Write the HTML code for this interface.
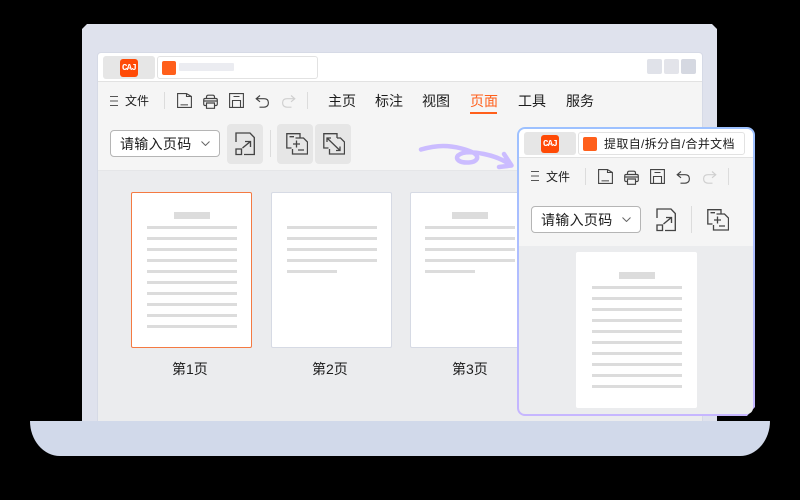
<!DOCTYPE html>
<html lang="zh"><head><meta charset="utf-8"><title>CAJ</title>
<style>
*{box-sizing:border-box;margin:0;padding:0}
html,body{width:800px;height:500px;background:#000;overflow:hidden}
body{position:relative;font-family:"Liberation Sans","Noto Sans CJK SC",sans-serif;color:#1c1c1c}
.a{position:absolute}
.t{position:absolute;white-space:nowrap;line-height:20px}
.logo{position:absolute;width:18px;height:18px;background:#ff4a06;border-radius:3px;color:#fff;font:bold 9px/18px "Liberation Mono",monospace;text-align:center;letter-spacing:-.7px}
.l{position:absolute;height:3px;background:#dcdcdc}
.card{position:absolute;width:121px;height:156px;background:#fff;border:1px solid #d6dae4;border-radius:2px}
svg{position:absolute;overflow:visible;fill:none}
</style></head><body>
<svg width="0" height="0" style="position:absolute"><defs>
<symbol id="menu" viewBox="0 0 8 10"><path d="M0 .5H8M0 5H8M0 9.5H8" stroke="#555" stroke-width="1" fill="none"/></symbol>
<symbol id="file" viewBox="0 0 15 15"><path d="M.6 .6H9.500L14.400 3.500V14.400H.6ZM9.500 .6V3.500H14.400" stroke="#444" stroke-width="1.100" fill="none"/><path d="M3.500 11.800H11" stroke="#777" stroke-width="1.400" fill="none"/></symbol>
<symbol id="print" viewBox="0 0 15 15"><path d="M3.500 4.500V3Q3.500 1.200 5.300 1.200H9.700Q11.500 1.200 11.500 3V4.500M3.500 11.500H2Q.7 11.500 .7 10V6Q.7 4.500 2 4.500H13Q14.300 4.500 14.300 6V10Q14.300 11.500 13 11.500H11.500M.9 7H14.100M3.500 9H11.500V14.300H3.500Z" stroke="#444" stroke-width="1.150" fill="none"/></symbol>
<symbol id="save" viewBox="0 0 15 15"><path d="M.6 .6H14.400V14.400H.6ZM3.500 14.400V7.500H11.500V14.400M4.500 3.500H10.500" stroke="#444" stroke-width="1.100" fill="none"/></symbol>
<symbol id="undo" viewBox="0 0 15 15"><path d="M5 1.500L1.200 4.700L5 7.800M1.500 4.700H9Q13.400 4.700 13.400 8.700T9 13.200H4.500" stroke="#444" stroke-width="1.150" fill="none"/></symbol>
<symbol id="redo" viewBox="0 0 15 15"><path d="M10 1.500L13.800 4.700L10 7.800M13.500 4.700H6Q1.600 4.700 1.600 8.700T6 13.200H10.500" stroke="#cfcfcf" stroke-width="1.150" fill="none"/></symbol>
<symbol id="ext" viewBox="0 0 20 24"><path d="M1 10V1H15L19.300 5.500V22.500H9" stroke="#444" stroke-width="1.350" fill="none"/><path d="M1 17H6.500V22.500H1ZM7.500 16L15 9.800M10 9.500H15.500V15" stroke="#444" stroke-width="1.350" fill="none"/></symbol>
<symbol id="merge" viewBox="0 0 22 22"><path d="M5.500 15H.8V.7H14V5M9.500 5H17.500L21.500 9V21H6.500V16" stroke="#444" stroke-width="1.300" fill="none"/><path d="M7 11H14M10.500 7.500V14.500M12 17H18M3.500 3.700H8" stroke="#444" stroke-width="1.300" fill="none"/></symbol>
<symbol id="split" viewBox="0 0 22 22"><path d="M5.500 15H.8V.7H14V5M14 5H17.500L21.500 9V21H6.500V16" stroke="#444" stroke-width="1.300" fill="none"/><path d="M4 5L17 17.500M4 9V5H8M13 17.500H17V13.500" stroke="#444" stroke-width="1.300" fill="none"/></symbol>
<symbol id="chev" viewBox="0 0 9 5"><path d="M.5 .5L4.500 4.500L8.500 .5" stroke="#666" stroke-width="1" fill="none"/></symbol>
</defs></svg>

<!-- laptop lid -->
<div class="a" style="left:82px;top:24px;width:635px;height:397px;background:#dfe2ed;clip-path:polygon(5px 0,630px 0,635px 5px,635px 397px,0 397px,0 5px)"></div>
<!-- screen -->
<div class="a" style="left:97px;top:52px;width:606px;height:369px;background:#d6dae6;border-radius:4px 4px 0 0"></div>
<div class="a" style="left:98px;top:53px;width:604px;height:28px;background:#fff;border-radius:3px 3px 0 0"></div>
<div class="a" style="left:98px;top:81px;width:604px;height:1px;background:#e2e2e2"></div>
<div class="a" style="left:98px;top:82px;width:604px;height:88px;background:#f5f5f5"></div>
<div class="a" style="left:98px;top:170px;width:604px;height:251px;background:#ebecee;border-top:1px solid #e5e6e8"></div>

<!-- title bar -->
<div class="a" style="left:103px;top:56px;width:52px;height:23px;background:#e6e6e6;border-radius:3px"></div>
<div class="logo" style="left:120px;top:59px">CAJ</div>
<div class="a" style="left:157px;top:56px;width:161px;height:23px;background:#fff;border:1px solid #e2e2e2;border-radius:3px"></div>
<div class="a" style="left:162px;top:61px;width:14px;height:14px;background:#ff5f1b;border-radius:2px"></div>
<div class="a" style="left:179px;top:63px;width:55px;height:8px;background:#ebecf1;border-radius:1px"></div>
<div class="a" style="left:647px;top:59px;width:15px;height:15px;background:#e0e2e9;border-radius:2px"></div>
<div class="a" style="left:664px;top:59px;width:15px;height:15px;background:#e3e4ea;border-radius:2px"></div>
<div class="a" style="left:681px;top:59px;width:15px;height:15px;background:#d5d8e1;border-radius:2px"></div>

<!-- menu row -->
<svg style="left:110px;top:96px" width="8" height="10"><use href="#menu"/></svg>
<div class="t" style="left:125px;top:91px;font-size:12px">文件</div>
<div class="a" style="left:164px;top:92px;width:1px;height:17px;background:#dcdcdc"></div>
<svg style="left:177px;top:93px" width="15" height="15"><use href="#file"/></svg>
<svg style="left:203px;top:94px" width="15" height="15"><use href="#print"/></svg>
<svg style="left:229px;top:93px" width="15" height="15"><use href="#save"/></svg>
<svg style="left:255px;top:94px" width="15" height="15"><use href="#undo"/></svg>
<svg style="left:281px;top:94px" width="15" height="15"><use href="#redo"/></svg>
<div class="a" style="left:307px;top:92px;width:1px;height:17px;background:#dcdcdc"></div>
<div class="t" style="left:328px;top:91px;font-size:14px">主页</div>
<div class="t" style="left:375px;top:91px;font-size:14px">标注</div>
<div class="t" style="left:422px;top:91px;font-size:14px">视图</div>
<div class="t" style="left:470px;top:91px;font-size:14px;color:#ff5f1b">页面</div>
<div class="a" style="left:470px;top:112px;width:27px;height:2px;background:#ff5f1b"></div>
<div class="t" style="left:518px;top:91px;font-size:14px">工具</div>
<div class="t" style="left:566px;top:91px;font-size:14px">服务</div>

<!-- toolbar row -->
<div class="a" style="left:110px;top:130px;width:110px;height:27px;background:#fff;border:1px solid #b5b5b5;border-radius:4px"></div>
<div class="t" style="left:120px;top:134px;font-size:14px;letter-spacing:.3px">请输入页码</div>
<svg style="left:201px;top:141px" width="9" height="5"><use href="#chev"/></svg>
<div class="a" style="left:227px;top:124px;width:36px;height:40px;background:#e6e6e6;border-radius:4px"></div>
<svg style="left:235px;top:132px" width="20" height="24"><use href="#ext"/></svg>
<div class="a" style="left:270px;top:130px;width:1px;height:27px;background:#dcdcdc"></div>
<div class="a" style="left:277px;top:124px;width:36px;height:40px;background:#e6e6e6;border-radius:4px"></div>
<svg style="left:286px;top:133px" width="22" height="22"><use href="#merge"/></svg>
<div class="a" style="left:315px;top:124px;width:36px;height:40px;background:#e6e6e6;border-radius:4px"></div>
<svg style="left:323px;top:133px" width="22" height="22"><use href="#split"/></svg>

<!-- pages -->
<div class="card" style="left:131px;top:192px;border-color:#f47a42"></div>
<div class="a" style="left:174px;top:212px;width:36px;height:7px;background:#dcdcdc"></div>
<div class="l" style="left:147px;top:226px;width:90px"></div><div class="l" style="left:147px;top:237px;width:90px"></div>
<div class="l" style="left:147px;top:248px;width:90px"></div><div class="l" style="left:147px;top:259px;width:90px"></div>
<div class="l" style="left:147px;top:270px;width:90px"></div><div class="l" style="left:147px;top:281px;width:90px"></div>
<div class="l" style="left:147px;top:292px;width:90px"></div><div class="l" style="left:147px;top:303px;width:90px"></div>
<div class="l" style="left:147px;top:314px;width:90px"></div><div class="l" style="left:147px;top:325px;width:90px"></div>
<div class="t" style="left:172px;top:359px;font-size:14px">第1页</div>

<div class="card" style="left:271px;top:192px"></div>
<div class="l" style="left:287px;top:226px;width:90px"></div><div class="l" style="left:287px;top:237px;width:90px"></div>
<div class="l" style="left:287px;top:248px;width:90px"></div><div class="l" style="left:287px;top:259px;width:90px"></div>
<div class="l" style="left:287px;top:270px;width:50px"></div>
<div class="t" style="left:312px;top:359px;font-size:14px">第2页</div>

<div class="card" style="left:410px;top:192px"></div>
<div class="a" style="left:452px;top:212px;width:36px;height:7px;background:#dcdcdc"></div>
<div class="l" style="left:425px;top:226px;width:90px"></div><div class="l" style="left:425px;top:237px;width:90px"></div>
<div class="l" style="left:425px;top:248px;width:90px"></div><div class="l" style="left:425px;top:259px;width:90px"></div>
<div class="l" style="left:425px;top:270px;width:50px"></div>
<div class="t" style="left:452px;top:359px;font-size:14px">第3页</div>

<!-- arrow -->
<svg style="left:0;top:0" width="800" height="500"><path d="M421 149.500C430 147 436 146 443 146C456 146 468 150 474 153C480 157 477 162 469 162.500C459 163 455 159 458 155.500C463 151 474 152 484 154C494 156 504 160 511 165.500M504 154L511.500 165.500L499 167" stroke="#cbbcff" stroke-width="4.500" stroke-linecap="round" stroke-linejoin="round"/></svg>

<!-- base -->
<div class="a" style="left:30px;top:421px;width:740px;height:35px;background:#d1d9ea;border-radius:0 0 30px 30px/0 0 35px 35px"></div>

<!-- popup -->
<div class="a" style="left:517px;top:127px;width:238px;height:289px;background:linear-gradient(180deg,#9dc1ff 0%,#b4bcff 60%,#c6b6ff 100%);border-radius:8px;clip-path:polygon(0 0,100% 0,100% 280px,230px 100%,0 100%)"></div>
<div class="a" style="left:519px;top:129px;width:234px;height:285px;background:#ebecee;border-radius:6px;overflow:hidden">
  <div class="a" style="left:0;top:0;width:234px;height:28px;background:#fff"></div>
  <div class="a" style="left:0;top:28px;width:234px;height:1px;background:#e2e2e2"></div>
  <div class="a" style="left:0;top:29px;width:234px;height:88px;background:#f5f5f5"></div>
</div>
<div class="a" style="left:524px;top:132px;width:52px;height:23px;background:#e6e6e6;border-radius:3px"></div>
<div class="logo" style="left:541px;top:135px">CAJ</div>
<div class="a" style="left:578px;top:132px;width:167px;height:23px;background:#fff;border:1px solid #e2e2e2;border-radius:3px"></div>
<div class="a" style="left:583px;top:137px;width:14px;height:14px;background:#ff5f1b;border-radius:2px"></div>
<div class="t" style="left:604px;top:134px;font-size:12px;letter-spacing:.35px">提取自/拆分自/合并文档</div>

<svg style="left:531px;top:171px" width="8" height="10"><use href="#menu"/></svg>
<div class="t" style="left:546px;top:167px;font-size:12px">文件</div>
<div class="a" style="left:585px;top:168px;width:1px;height:17px;background:#dcdcdc"></div>
<svg style="left:598px;top:169px" width="15" height="15"><use href="#file"/></svg>
<svg style="left:624px;top:170px" width="15" height="15"><use href="#print"/></svg>
<svg style="left:650px;top:169px" width="15" height="15"><use href="#save"/></svg>
<svg style="left:676px;top:170px" width="15" height="15"><use href="#undo"/></svg>
<svg style="left:702px;top:170px" width="15" height="15"><use href="#redo"/></svg>
<div class="a" style="left:728px;top:168px;width:1px;height:17px;background:#dcdcdc"></div>

<div class="a" style="left:531px;top:206px;width:110px;height:27px;background:#fff;border:1px solid #b5b5b5;border-radius:4px"></div>
<div class="t" style="left:541px;top:210px;font-size:14px;letter-spacing:.3px">请输入页码</div>
<svg style="left:622px;top:217px" width="9" height="5"><use href="#chev"/></svg>
<svg style="left:656px;top:208px" width="20" height="24"><use href="#ext"/></svg>
<div class="a" style="left:691px;top:206px;width:1px;height:27px;background:#dcdcdc"></div>
<svg style="left:707px;top:209px" width="22" height="22"><use href="#merge"/></svg>

<div class="a" style="left:576px;top:252px;width:121px;height:156px;background:#fff;border-radius:2px"></div>
<div class="a" style="left:619px;top:272px;width:36px;height:7px;background:#dcdcdc"></div>
<div class="l" style="left:592px;top:286px;width:90px"></div><div class="l" style="left:592px;top:297px;width:90px"></div>
<div class="l" style="left:592px;top:308px;width:90px"></div><div class="l" style="left:592px;top:319px;width:90px"></div>
<div class="l" style="left:592px;top:330px;width:90px"></div><div class="l" style="left:592px;top:341px;width:90px"></div>
<div class="l" style="left:592px;top:352px;width:90px"></div><div class="l" style="left:592px;top:363px;width:90px"></div>
<div class="l" style="left:592px;top:374px;width:90px"></div><div class="l" style="left:592px;top:385px;width:90px"></div>
</body></html>
